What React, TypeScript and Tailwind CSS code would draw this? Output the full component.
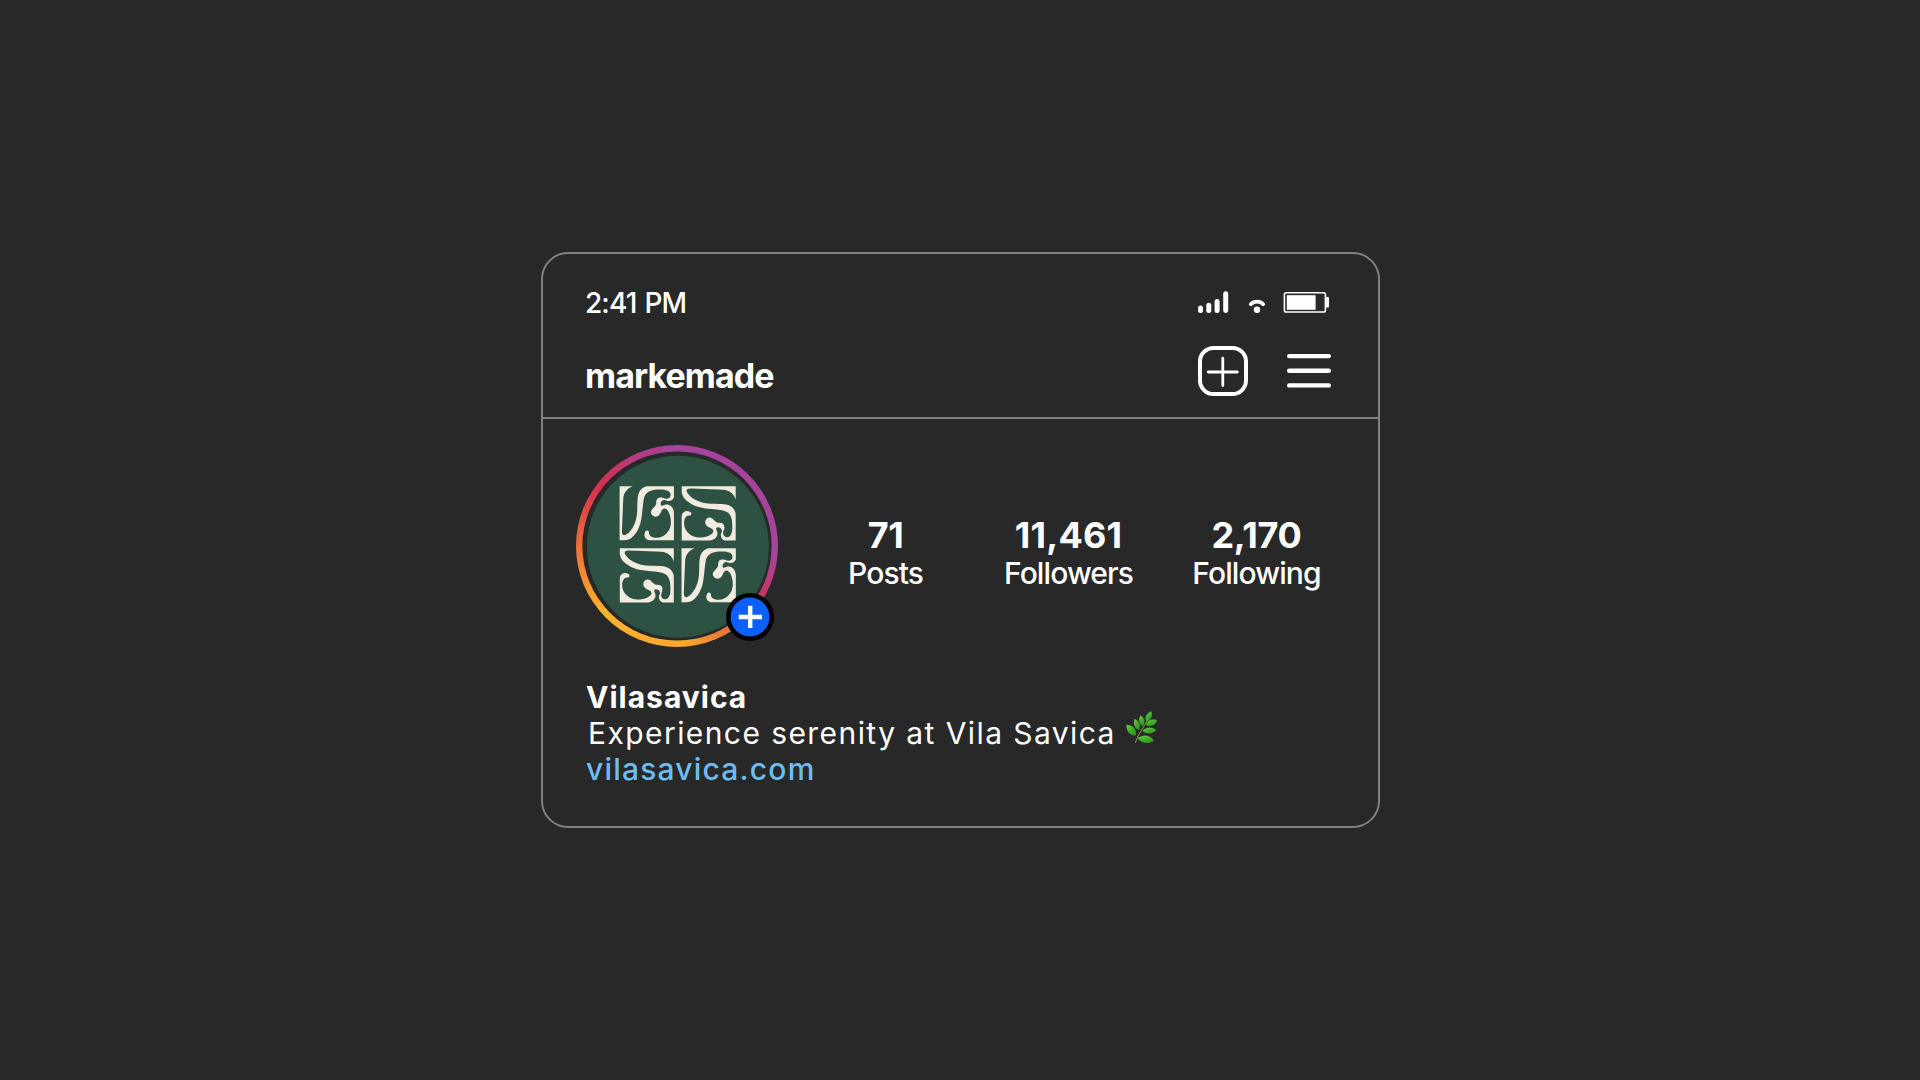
const STATS = [
  { value: "71", label: "Posts", box: "w-[120px]", track: "tracking-[-0.6px]" },
  { value: "11,461", label: "Followers", box: "w-[130px]", track: "tracking-[0.2px]" },
  { value: "2,170", label: "Following", box: "w-[130px]", track: "tracking-[-0.3px]" },
];

const TILE =
  "M0 0H40C24 5 12 19 11 37L7 132C6 147 12 150 20 145C41 132 52 102 53 72C54 37 51 12 76 2C80 0 84 0 90 0H163V34C158 44 148 47 140 43C132 38 123 44 123 54C125 62 131 58 138 55C154 53 163 67 163 82V162H88C76 159 72 149 76 139C79 129 90 133 88 140C88 149 98 155 111 155C136 155 154 132 154 109C154 87 146 69 136 67C126 67 126 77 120 85C112 96 96 92 94 80C92 69 108 63 110 52C108 37 118 31 130 35C142 41 152 37 153 27C154 15 141 10 121 10C91 10 76 17 72 42C66 82 68 107 54 132C44 150 31 162 16 162H0Z";

function StatusIcons() {
  return (
    <svg width="132" height="24" viewBox="0 0 132 24" fill="none">
      {/* signal */}
      <g fill="#fff">
        <rect x="0" y="15.5" width="5" height="7.5" rx="2.5" />
        <rect x="8.3" y="12.7" width="5" height="10.3" rx="2.5" />
        <rect x="16.6" y="9" width="5" height="14" rx="2.5" />
        <rect x="25.2" y="1.3" width="5" height="21.7" rx="2.4" />
      </g>
      {/* wifi */}
      <path d="M52.8 14.2C56 10.8 62 10.8 65.2 14.2" stroke="#fff" strokeWidth="3.8" strokeLinecap="round" />
      <circle cx="59" cy="19.7" r="3.2" fill="#fff" />
      {/* battery */}
      <rect x="86.4" y="2.8" width="41" height="19.2" rx="1.8" stroke="#fff" strokeWidth="1.6" />
      <rect x="88.8" y="5.2" width="28.8" height="14.6" fill="#fff" />
      <rect x="127.8" y="7" width="3.2" height="10.5" rx="0.8" fill="#fff" />
    </svg>
  );
}

function Leaf() {
  return (
    <svg className="ml-[10px] mt-[-11px] overflow-visible" width="32" height="32" viewBox="0 0 96 96" fill="none">
      <defs>
        <linearGradient id="leaf" x1="0" y1="0" x2="0.7" y2="1">
          <stop offset="0" stopColor="#63cf3c" />
          <stop offset="1" stopColor="#2a9420" />
        </linearGradient>
      </defs>
      <g fill="url(#leaf)">
        <path d="M1 38C18 38 33 50 30 70C12 72 1 58 1 38Z" />
        <path d="M26 20C40 27 46 40 39 54C25 49 20 34 26 20Z" />
        <path d="M43 10C55 17 60 30 51 43C39 37 36 23 43 10Z" />
        <path d="M76 -2C81 12 76 24 61 29C54 17 61 4 76 -2Z" />
        <path d="M93 24C91 38 77 45 60 40C63 26 76 20 93 24Z" />
        <path d="M91 54C80 67 62 68 49 57C59 44 78 43 91 54Z" />
        <path d="M84 86C69 97 47 96 35 78C52 65 73 69 84 86Z" />
      </g>
      <path d="M28 92C34 72 47 53 64 27" stroke="#6fa832" strokeWidth="3" strokeLinecap="round" />
    </svg>
  );
}

function Avatar() {
  return (
    <div className="relative size-[202px] shrink-0 rounded-full bg-[conic-gradient(#a6439a_0deg,#a6439a_97deg,#c8355f_120deg,#ea7238_148deg,#fba72e_175deg,#fdb32c_228deg,#f4902f_250deg,#ec6c3b_272deg,#d6304b_306deg,#b53c80_335deg,#a6439a_355deg)]">
      <svg className="absolute inset-0" width="202" height="202" viewBox="0 0 202 202">
        <circle cx="101" cy="101" r="94.6" fill="#282828" />
        <circle cx="101.9" cy="101.8" r="91" fill="#2d5243" />
        <g fill="#f1ecdf">
          <path d={TILE} transform="translate(43.6 41.2) scale(.3333)" />
          <path d={TILE} transform="translate(159.7 41.2) rotate(90) scale(.3333)" />
          <path d={TILE} transform="translate(97.8 103.2) rotate(90) scale(.3333)" />
          <path d={TILE} transform="translate(105.5 103.2) scale(.3333)" />
        </g>
      </svg>
      <svg className="absolute left-[150px] top-[148.5px]" width="48" height="48" viewBox="0 0 48 48">
        <circle cx="24" cy="24" r="24" fill="#000" />
        <circle cx="24" cy="24" r="19.4" fill="#0b60ff" />
        <path d="M12.7 24H36M24.2 12.8V35" stroke="#fff" strokeWidth="4.4" />
      </svg>
    </div>
  );
}

export default function App() {
  return (
    <div className="flex h-screen w-full items-center justify-center bg-[#282828] font-['Inter','Liberation_Sans',sans-serif] text-white">
      <div className="ml-px h-[576px] w-[839px] rounded-[27px] border-2 border-[#808080]">
        {/* Header */}
        <header className="border-b-2 border-[#808080] pb-[21px] pl-[42px] pr-[47px] pt-8">
          <div className="flex h-8 items-center justify-between pr-[1px]">
            <span className="pt-[2px] text-[28px] font-medium leading-8 tracking-[-0.9px] [word-spacing:1.5px]">2:41 PM</span>
            <StatusIcons />
          </div>
          <div className="mt-7 flex h-[50px] items-center justify-between">
            <span className="pt-[9px] text-[34px] font-bold leading-10 tracking-[-0.9px]">markemade</span>
            <div className="flex items-center gap-[39px]">
              <svg width="50" height="50" viewBox="0 0 50 50" fill="none" stroke="#fff" strokeLinecap="round">
                <rect x="2" y="2" width="46" height="46" rx="13.5" strokeWidth="4" />
                <path d="M10.3 26H39.3M24.8 12.2V39.6" strokeWidth="2.8" />
              </svg>
              <svg width="44" height="50" viewBox="0 0 44 50" stroke="#fff" strokeWidth="4.4" strokeLinecap="round">
                <path d="M2.2 10.1H41.8M2.2 24.8H41.8M2.2 39.4H41.8" />
              </svg>
            </div>
          </div>
        </header>

        {/* Profile */}
        <section className="flex pl-[33px] pt-[25.5px]">
          <Avatar />
          <div className="ml-[47.5px] mt-[70.5px] flex">
            {STATS.map((s, i) => (
              <div
                key={s.label}
                className={`${s.box} ${i > 0 ? "ml-[58px]" : ""} flex flex-col items-center whitespace-nowrap`}
              >
                <span className={`${s.track} text-[36px] font-bold leading-10`}>{s.value}</span>
                <span className="text-[30px] font-medium leading-9 tracking-[-0.9px]">{s.label}</span>
              </div>
            ))}
          </div>
        </section>

        {/* Bio */}
        <section className="mt-[32.5px] pl-[43px] text-[30px] leading-9">
          <p className="font-bold tracking-[1px]">Vilasavica</p>
          <p className="flex items-center whitespace-nowrap pl-[2px] font-normal tracking-[1.42px]">
            Experience serenity at Vila Savica
            <Leaf />
          </p>
          <p className="font-medium tracking-[1.2px] text-[#6dbcf4]">vilasavica.com</p>
        </section>
      </div>
    </div>
  );
}
